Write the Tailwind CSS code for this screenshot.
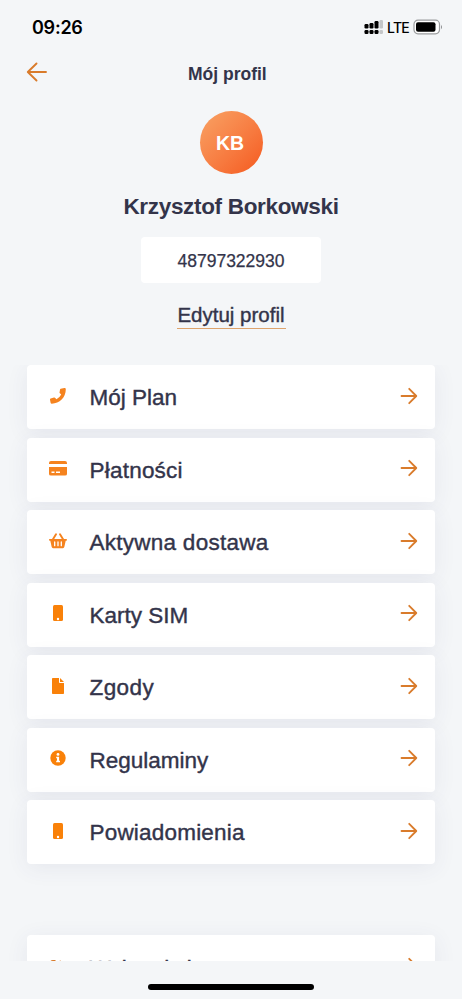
<!DOCTYPE html>
<html lang="pl">
<head>
<meta charset="utf-8">
<title>Mój profil</title>
<script src="https://cdn.jsdelivr.net/npm/@tailwindcss/browser@4"></script>
</head>
<body class="bg-[#f4f6f8] overflow-hidden">
<svg class="hidden">
  <symbol id="go" viewBox="0 0 18 18"><path d="M1.5 9H16M9.2 1.8 16.3 9 9.2 16.2" fill="none" stroke="#d97b2b" stroke-width="1.8" stroke-linecap="round" stroke-linejoin="round"/></symbol>
  <symbol id="phone" viewBox="0 0 16 16"><path fill="#f5831f" d="M10.700.7 14.300 0q1.500-.1 1.500 1.300C15.800 9.500 9.500 15.700 1.800 15.700q-1 0-1.200-.9L0 11.700q-.1-.8.700-1.200l3.300-1q.8-.2 1.300.4l1.100 1.300q3.200-1.500 4.800-4.800L9.900 5.300q-.6-.5-.3-1.200l.5-2.800q.1-.5.600-.6z"/></symbol>
  <symbol id="mobile" viewBox="0 0 10 16"><rect width="10" height="16" rx="1.500" fill="#f98109"/><circle cx="5" cy="14" r="1.200" fill="#fff"/></symbol>
</svg>
<div class="w-[462px] h-[999px] flex flex-col overflow-hidden font-['Liberation_Sans',Arial,sans-serif] text-[#33344a]">
  <header class="h-[55px] shrink-0 flex items-center justify-between pl-8 pr-[19px] text-black">
    <span class="font-['Inter',sans-serif] font-semibold text-[18px] leading-6 tracking-[-0.25px]">09:26</span>
    <div class="flex items-center">
      <svg width="20" height="16" viewBox="0 0 20 16"><g fill="#000"><rect x="0.5" y="4" width="4" height="4.500" rx="1.200"/><rect x="5.500" y="3" width="4" height="5.500" rx="1.200"/><rect x="10.500" y="1" width="4" height="7.500" rx="1.200"/><rect x="0.5" y="10" width="4" height="4" rx="1.200"/><rect x="5.500" y="10" width="4" height="4" rx="1.200"/><rect x="10.500" y="10" width="4" height="4" rx="1.200"/></g><g fill="#c4c6c8"><rect x="15.500" y="0" width="3.500" height="8.500" rx="1.200"/><rect x="15.500" y="10" width="3.500" height="4" rx="1.200"/></g></svg>
      <span class="ml-[3px] w-[22px] font-['Inter',sans-serif] text-[14px] leading-5 font-medium tracking-[-0.7px]">LTE</span>
      <svg class="ml-[4px] -mt-px" width="30" height="16" viewBox="0 0 30 16"><rect x="1" y="1.200" width="25.500" height="13.600" rx="4" fill="#fff" stroke="#9a9c9e" stroke-width="1.200"/><rect x="3" y="3.200" width="19.500" height="9.600" rx="2" fill="#000"/><path d="M28 5.700q2 2.300 0 4.600z" fill="#8d8f91"/></svg>
    </div>
  </header>
  <div class="h-[39px] shrink-0 grid grid-cols-[188px_auto_1fr] items-center">
    <svg class="ml-[26px] -mt-[5px]" width="22" height="20" viewBox="0 0 22 20"><path d="M20 10H2M10.500 1.500 1.800 10l8.700 8.500" fill="none" stroke="#d97b2b" stroke-width="1.900" stroke-linecap="round" stroke-linejoin="round"/></svg>
    <h1 class="font-bold text-[17.500px] leading-6 -mt-0.5">Mój profil</h1>
    <span></span>
  </div>
  <section class="h-[271px] shrink-0 flex flex-col items-center pt-[17px]">
    <div class="size-[63px] rounded-full bg-linear-135 from-[#f8a264] to-[#f4581b] flex items-center justify-center text-white font-bold text-[19.5px] leading-6"><span class="-ml-0.5">KB</span></div>
    <h2 class="mt-[19px] font-bold text-[22.500px] leading-7 tracking-[-0.32px]">Krzysztof Borkowski</h2>
    <div class="mt-[16px] w-[180px] h-[46px] rounded bg-white flex items-center justify-center pt-0.5 text-[17.500px] [-webkit-text-stroke:0.25px]">48797322930</div>
    <a class="mt-[19px] h-[27px] w-[109px] text-center whitespace-nowrap border-b-[1.5px] border-[#dda36c] text-[20.500px] leading-[26px] [-webkit-text-stroke:0.4px]">Edytuj profil</a>
  </section>
  <main class="h-[596px] shrink-0 overflow-hidden px-[27px] text-[22.500px]">
    <ul class="flex flex-col gap-[8.500px] [&>li]:h-16 [&>li]:shrink-0 [&>li]:rounded [&>li]:bg-white [&>li]:flex [&>li]:items-center [&>li]:pr-[17px] [&>li]:shadow-[0_4px_22px_rgba(70,70,110,0.08)] [&>li>div]:w-[61px] [&>li>div]:mr-[1.500px] [&>li>div]:flex [&>li>div]:justify-center [&>li>div]:-mt-[3px] [&>li>span]:flex-1 [&>li>span]:mt-0.5 [&>li>span]:[-webkit-text-stroke:0.4px] [&>li>svg]:size-[18px] [&>li>svg]:-mt-[3px]">
      <li><div><svg width="16" height="16"><use href="#phone"/></svg></div><span>Mój Plan</span><svg><use href="#go"/></svg></li>
      <li><div><svg width="18" height="15" viewBox="0 0 18 15"><path fill="#f5831f" d="M2 0h14q2 0 2 2v1H0V2Q0 0 2 0zM0 6h18v7q0 1.500-2 1.500H2Q0 14.500 0 13z"/><path d="M2.500 11.200h3M7 11.200h4" stroke="#fff" stroke-width="1.600"/></svg></div><span class="tracking-[0.22px]">Płatności</span><svg><use href="#go"/></svg></li>
      <li><div><svg width="18" height="16" viewBox="0 0 18 16"><path d="M3.500 7 7 1.300M14.500 7 11 1.300" stroke="#f5831f" stroke-width="1.900" stroke-linecap="round"/><path fill="#f5831f" d="M.8 6h16.400q.8 0 .8.800t-.8.900h-.5l-1.400 6.400Q15 15.200 14 15.200H4q-1 0-1.300-1.100L1.300 7.700H.8Q0 7.700 0 6.800T.8 6z"/><path d="M5.700 9v3.700M9 9v3.700M12.300 9v3.700" stroke="#fff" stroke-width="1.300" stroke-linecap="round"/></svg></div><span class="tracking-[0.26px]">Aktywna dostawa</span><svg><use href="#go"/></svg></li>
      <li><div><svg width="10" height="16"><use href="#mobile"/></svg></div><span>Karty SIM</span><svg><use href="#go"/></svg></li>
      <li><div><svg width="12" height="16" viewBox="0 0 12 16"><path fill="#f98109" d="M.8 0H7v4.200q0 .8.800.8H12v10.200q0 .8-.8.800H.8Q0 16 0 15.200V.8Q0 0 .8 0zM8 0l4 4H8z"/></svg></div><span class="tracking-[0.4px]">Zgody</span><svg><use href="#go"/></svg></li>
      <li><div><svg width="16" height="16" viewBox="0 0 16 16"><circle cx="8" cy="8" r="7.700" fill="#f98109"/><circle cx="8" cy="4.400" r="1.400" fill="#fff"/><path fill="#fff" d="M6.200 6.700h2.900v4h.9v1.500H6.200v-1.500h.8V8.200h-.8z"/></svg></div><span>Regulaminy</span><svg><use href="#go"/></svg></li>
      <li><div><svg width="10" height="16"><use href="#mobile"/></svg></div><span class="tracking-[0.2px]">Powiadomienia</span><svg><use href="#go"/></svg></li>
      <li class="mt-[62px]"><div class="pt-1"><svg width="16" height="14" viewBox="0 0 16 14"><path d="M5.500 1H3Q1 1 1 3v8q0 2 2 2h2.500" fill="none" stroke="#d97b2b" stroke-width="2"/><path fill="#d97b2b" d="M5 5h4.500V1q.3-.8 1-.4L16 7l-5.500 6q-.7.500-1-.400V9H5z"/></svg></div><span class="pt-[3px]">Wyloguj się</span><svg class="relative top-px"><use href="#go"/></svg></li>
    </ul>
  </main>
  <footer class="h-[38px] shrink-0 flex justify-center pt-[23px]"><div class="w-[166px] h-[6px] rounded-full bg-black"></div></footer>
</div>
</body>
</html>
